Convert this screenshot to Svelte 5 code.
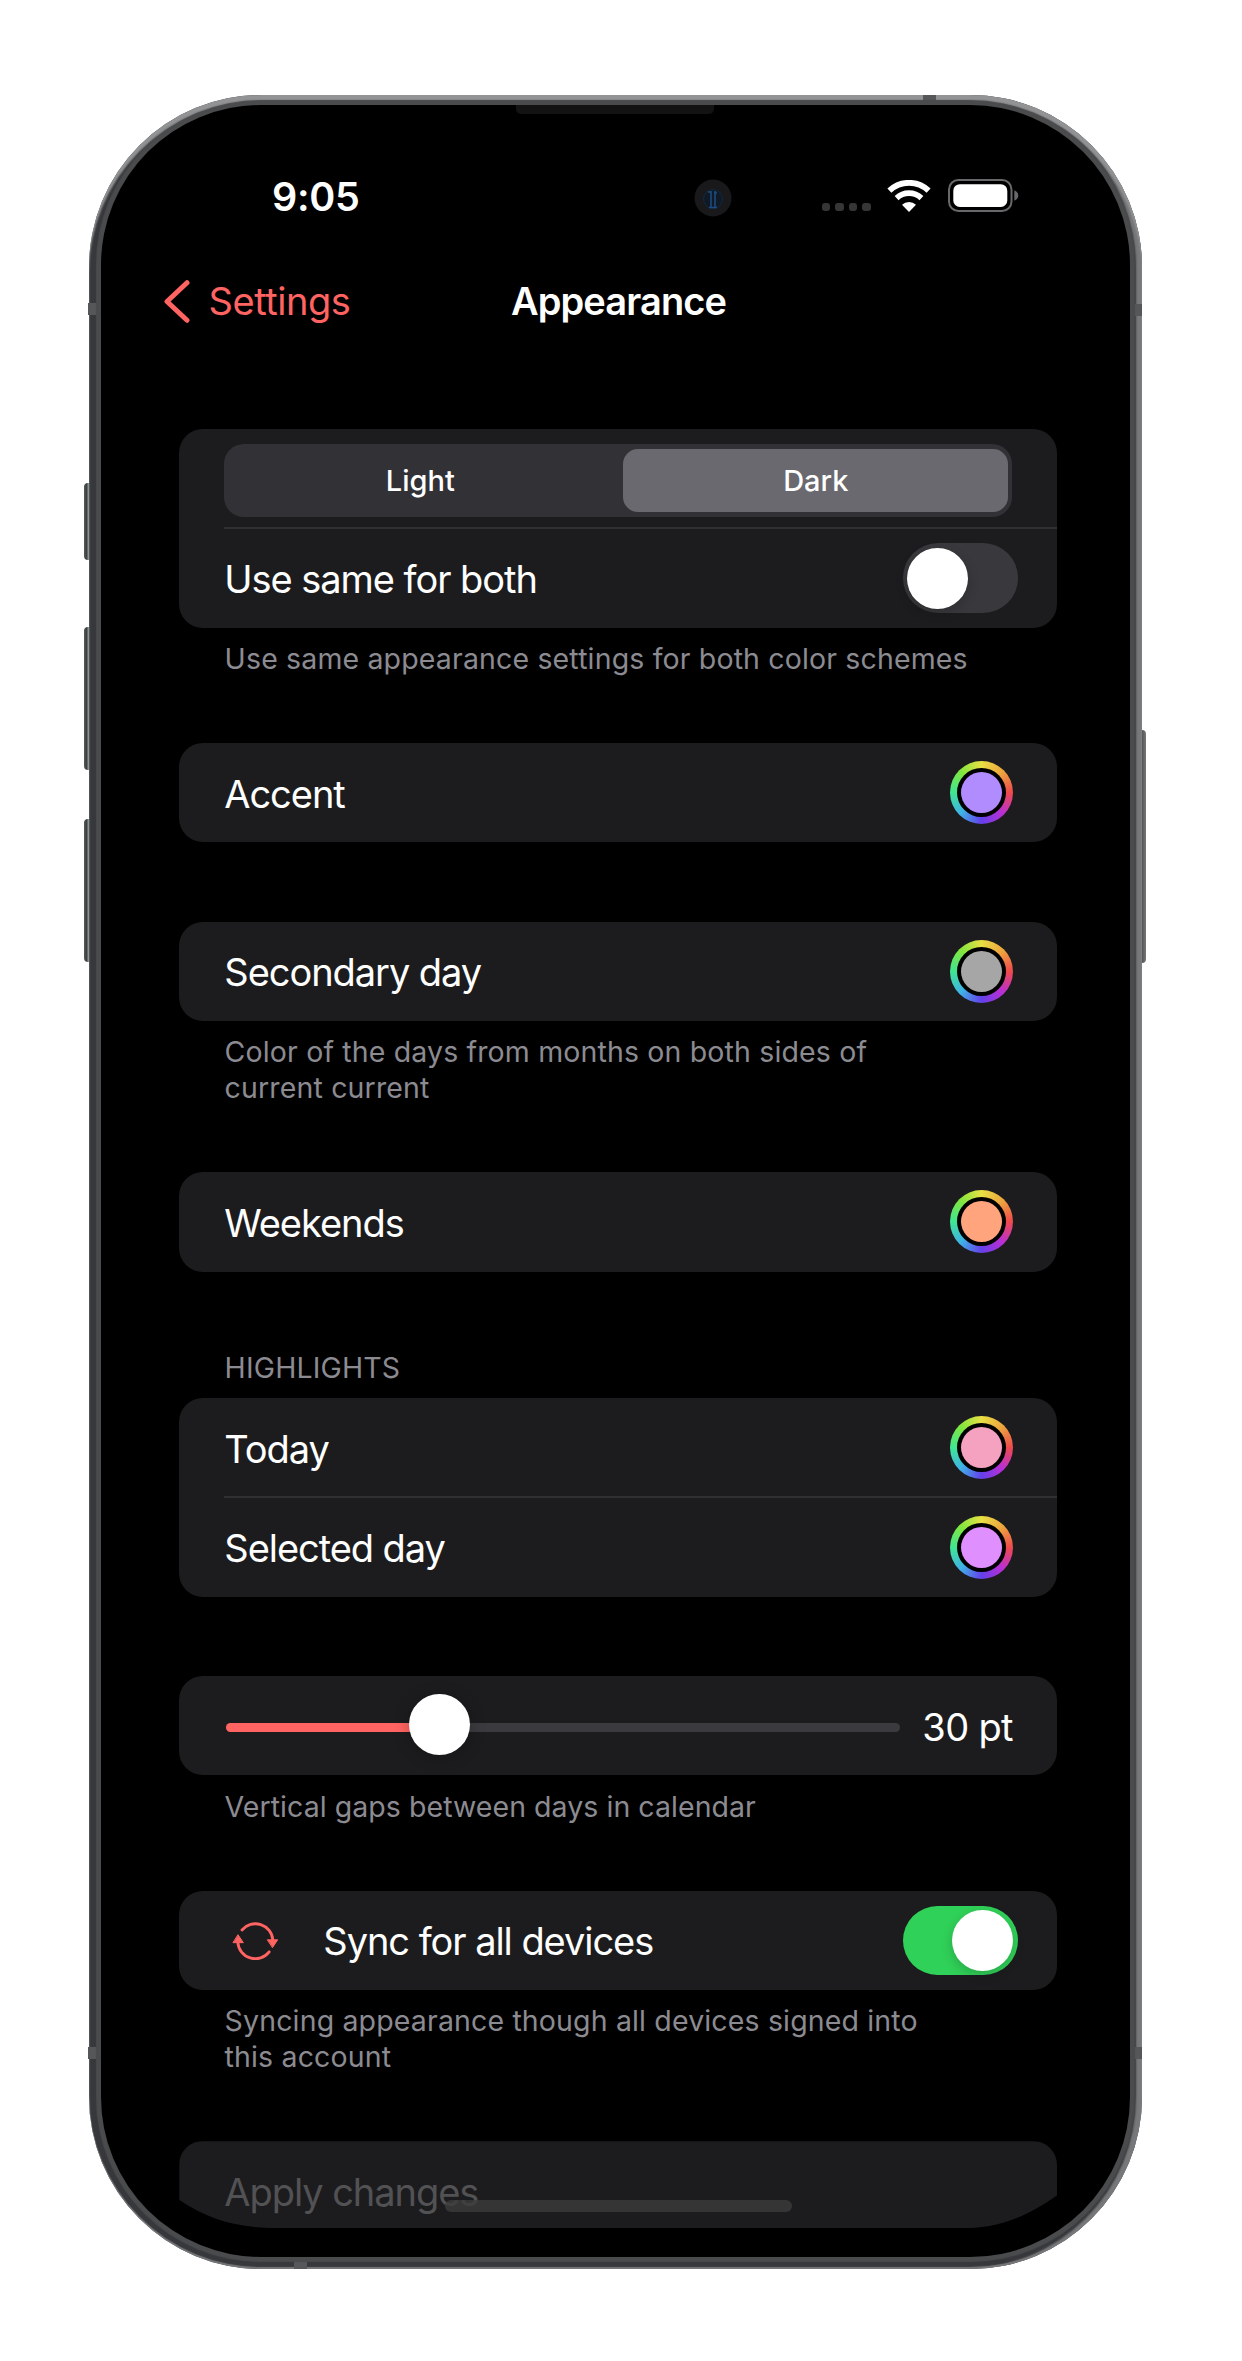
<script>
  let scheme = $state('Dark');
  let same = $state(false);
  let sync = $state(true);
  const gap = 30;
</script>

{#snippet swatch(color)}
  <span class="ring"><span class="well"><span class="fill" style:background={color}></span></span></span>
{/snippet}

{#snippet colorRow(label, color)}
  <div class="row"><span class="label">{label}</span>{@render swatch(color)}</div>
{/snippet}

<main class="stage">
  <div class="phone">
    <i class="key action"></i><i class="key up"></i><i class="key down"></i><i class="key power"></i>
    <i class="band b1"></i><i class="band b2"></i><i class="band b3"></i>
    <i class="band b4"></i><i class="band b5"></i><i class="band b6"></i>
    <div class="glass">
      <i class="speaker"></i>
      <i class="home"></i>

      <div class="status">
        <span class="time">9:05</span>
        <svg class="camera" viewBox="0 0 38 38">
          <circle cx="19" cy="19" r="18.5" fill="#19191b" />
          <circle cx="19" cy="20" r="9.500" fill="#101a26" stroke="#11283f" />
          <path d="M17 12v16M21 12v16M14 13h3M20 14h3M15 28.500h8" stroke="#1c4c82" stroke-width="1.500" fill="none" />
        </svg>
        <span class="dots"><i></i><i></i><i></i><i></i></span>
        <svg class="wifi" viewBox="0 0 44 32" fill="none" stroke="#fff">
          <path d="M2.400 10.600a28.500 28.500 0 0 1 39.200 0" stroke-width="5.800" />
          <path d="M9.600 18.100a18 18 0 0 1 24.800 0" stroke-width="5.600" />
          <path d="M22 32l-7-7.200a10.300 10.300 0 0 1 14 0z" fill="#fff" stroke="none" />
        </svg>
        <svg class="battery" viewBox="0 0 71 33">
          <rect x="1" y="1" width="62.500" height="31" rx="9.500" fill="none" stroke="#69696b" stroke-width="2" />
          <rect x="5.300" y="5.200" width="54" height="22.800" rx="6.500" fill="#fff" />
          <path d="M66.300 11.300q4 1.500 4 5.200t-4 5.200z" fill="#69696b" />
        </svg>
      </div>

      <header class="nav">
        <button class="back">
          <svg viewBox="0 0 26 43"><path d="M23 2.700L3 21.500L23 40.300" fill="none" stroke="#ff6462" stroke-width="5" stroke-linecap="round" stroke-linejoin="round" /></svg>
          Settings
        </button>
        <h1>Appearance</h1>
      </header>

      <div class="list">
        <section>
          <div class="card">
            <div class="row segrow">
              <div class="segments">
                {#each ['Light', 'Dark'] as name}
                  <button class:on={scheme === name} onclick={() => (scheme = name)}>{name}</button>
                {/each}
              </div>
            </div>
            <div class="row line">
              <span class="label">Use same for both</span>
              <button class="toggle" class:on={same} aria-label="Use same for both" onclick={() => (same = !same)}><span></span></button>
            </div>
          </div>
          <p class="caption">Use same appearance settings for both color schemes</p>
        </section>

        <section>
          <div class="card">{@render colorRow('Accent', '#b18cff')}</div>
        </section>

        <section>
          <div class="card">{@render colorRow('Secondary day', '#a6a6a6')}</div>
          <p class="caption">Color of the days from months on both sides of<br />current current</p>
        </section>

        <section>
          <div class="card">{@render colorRow('Weekends', '#ffa47c')}</div>
        </section>

        <section>
          <h2>HIGHLIGHTS</h2>
          <div class="card">
            {@render colorRow('Today', '#f5a1c0')}
            <div class="row line"><span class="label">Selected day</span>{@render swatch('#e08fff')}</div>
          </div>
        </section>

        <section>
          <div class="card">
            <div class="row">
              <div class="slider"><div class="done"><span class="thumb"></span></div></div>
              <span class="label value">{gap} pt</span>
            </div>
          </div>
          <p class="caption tight">Vertical gaps between days in calendar</p>
        </section>

        <section>
          <div class="card">
            <div class="row">
              <svg class="sync" viewBox="49 65 144 120" fill="none" stroke="#ff6462" stroke-width="8.500" stroke-linecap="round">
                <path d="M82 92A52.500 52.500 0 0 1 174.500 122" />
                <path d="M163.500 157.500A52.500 52.500 0 0 1 69.500 129" />
                <path d="M159 121.500h30L174 144zM56 130h30L70.500 107z" fill="#ff6462" stroke-width="3" stroke-linejoin="round" />
              </svg>
              <span class="label">Sync for all devices</span>
              <button class="toggle" class:on={sync} aria-label="Sync for all devices" onclick={() => (sync = !sync)}><span></span></button>
            </div>
          </div>
          <p class="caption">Syncing appearance though all devices signed into<br />this account</p>
        </section>

        <section>
          <div class="card last"><div class="row"><span class="label">Apply changes</span></div></div>
        </section>
      </div>
    </div>
  </div>
</main>

<style>
  :global(body) { background: #fff; margin: 0; }
  .stage {
    box-sizing: border-box;
    height: 2361px;
    padding: 95px 0 0 89px;
    font-family: Inter, "Liberation Sans", sans-serif;
    color: #fff;
  }
  button { border: 0; padding: 0; background: none; color: inherit; font: inherit; }
  .phone {
    position: relative;
    box-sizing: border-box;
    width: 1053px;
    height: 2174px;
    padding: 10px 12px 12px;
    border-radius: 172px;
    background: #37383b;
    box-shadow: inset 0 6px 2px #929394, inset -6px 0 2px #77787a, inset 0 -2px 1px #77787a;
  }
  .glass {
    position: relative;
    box-sizing: border-box;
    height: 2152px;
    padding-top: 60px;
    border-radius: 160px;
    background: #000;
    box-shadow: 0 0 1px 5px #4a4b4d;
  }
  .key { position: absolute; left: -5px; width: 5px; border-radius: 4px 0 0 4px; background: linear-gradient(90deg, #55595a, #3c4041 50%, #a5a9aa); }
  .action { top: 388px; height: 77px; }
  .up { top: 532px; height: 143px; }
  .down { top: 724px; height: 143px; }
  .power { left: auto; right: -4px; top: 635px; width: 4px; height: 233px; border-radius: 0 4px 4px 0; background: linear-gradient(90deg, #555, #777); }
  .band { position: absolute; background: #565759; width: 13px; height: 12px; }
  .b1 { left: -1px; top: 208px; }
  .b2 { right: 0; top: 209px; }
  .b3 { left: 834px; top: 0; height: 10px; }
  .b4 { left: 205px; bottom: 0; }
  .b5 { left: -1px; top: 1952px; }
  .b6 { right: 0; top: 1952px; }
  .speaker { position: absolute; top: 0; left: 415px; width: 198px; height: 9px; border-radius: 0 0 5px 5px; background: #131313; }
  .home { position: absolute; z-index: 2; left: 344px; top: 2095px; width: 347px; height: 11.500px; border-radius: 6px; background: rgba(60, 60, 60, 0.8); }

  .status { display: flex; align-items: center; height: 64px; padding-left: 171px; }
  .time { width: 422px; margin-top: -1px; font-size: 39.500px; font-weight: 600; letter-spacing: -0.300px; }
  .camera { width: 38px; height: 38px; margin-top: 1px; }
  .dots { display: flex; gap: 5.200px; margin: 20px 16px 0 90px; }
  .dots i { width: 8.300px; height: 8.500px; border-radius: 3px; background: #363637; }
  .wifi { width: 44px; height: 32px; margin-top: -3px; }
  .battery { width: 71px; height: 33px; margin: -4px 0 0 17px; }

  .nav { display: grid; grid-template-columns: 410px 1fr; align-items: center; height: 80px; margin-top: 32px; }
  .back { display: flex; align-items: center; gap: 19px; padding-left: 62.500px; font-size: 38px; letter-spacing: -0.450px; color: #ff6462; }
  .back svg { width: 26px; height: 43px; }
  h1 { margin: 0; font-size: 38px; font-weight: 600; letter-spacing: -0.900px; }

  .list { width: 878px; margin: 88px 0 0 78.300px; }
  section { display: flow-root; margin-bottom: 79.300px; }
  .card { border-radius: 24px; background: #1c1c1e; }
  .row { position: relative; display: flex; align-items: center; box-sizing: border-box; height: 99.330px; padding: 0 44.600px 0 45px; }
  .line::before { content: ''; position: absolute; top: -1px; left: 45px; right: 0; height: 1.500px; background: #303033; }
  .label { flex: 1; padding-top: 2px; font-size: 38px; letter-spacing: -1.050px; white-space: nowrap; }
  .caption, h2 { margin: 13.300px 0 -13.300px 45.300px; font-size: 28.500px; line-height: 36px; font-weight: 400; letter-spacing: 0.150px; color: #8b8b91; white-space: nowrap; }
  .tight { letter-spacing: 0.050px; }
  h2 { margin: -1.200px 0 12.500px 45.300px; }

  .segments { display: flex; box-sizing: border-box; width: 788px; height: 73px; padding: 5px 4px 5px 5px; border-radius: 20px; background: #323136; margin-top: 4px; }
  .segments button { flex: 1; border-radius: 15px; font-size: 29px; font-weight: 500; }
  .segments button:first-child { padding-right: 12px; }
  .segments .on { flex: 0 0 385px; background: #69696f; }

  .toggle { width: 115px; height: 69.500px; margin-right: -5px; padding: 4.500px; border-radius: 35px; background: #39393d; display: flex; }
  .toggle span { width: 61px; height: 61px; border-radius: 50%; background: #fff; box-shadow: 0 4px 12px rgba(0, 0, 0, 0.2); }
  .toggle.on { justify-content: flex-end; background: #30d158; }

  .ring, .well { display: grid; place-items: center; border-radius: 50%; }
  .ring { width: 63px; height: 63px; background: conic-gradient(#e8e044, #eda53e 12.500%, #ef4a4c 25%, #b92fd4 37.500%, #6440ea 50%, #3fb2e6 62.500%, #40e693 75%, #80e63e 87.500%, #e8e044); }
  .well { width: 49px; height: 49px; background: #000; }
  .fill { width: 41px; height: 41px; border-radius: 50%; }

  .slider { flex: 1; height: 9.500px; margin: 3px 22px 0 2px; border-radius: 5px; background: #3b3b3f; }
  .done { position: relative; width: 213px; height: 100%; border-radius: 5px; background: #ff6462; }
  .thumb { position: absolute; right: -30.500px; top: -28.500px; width: 61px; height: 61px; border-radius: 50%; background: #fff; box-shadow: 0 2px 16px rgba(0, 0, 0, 0.25); }
  .value { flex: none; letter-spacing: -0.700px; }
  .sync { width: 48px; height: 40px; margin: 2px 44px 0 7px; }
  .last { height: 87px; clip-path: path('M0 0H878V54C842 79 815 87 780 87H105C60 87 32 80 0 58.7Z'); color: #525254; }
</style>
